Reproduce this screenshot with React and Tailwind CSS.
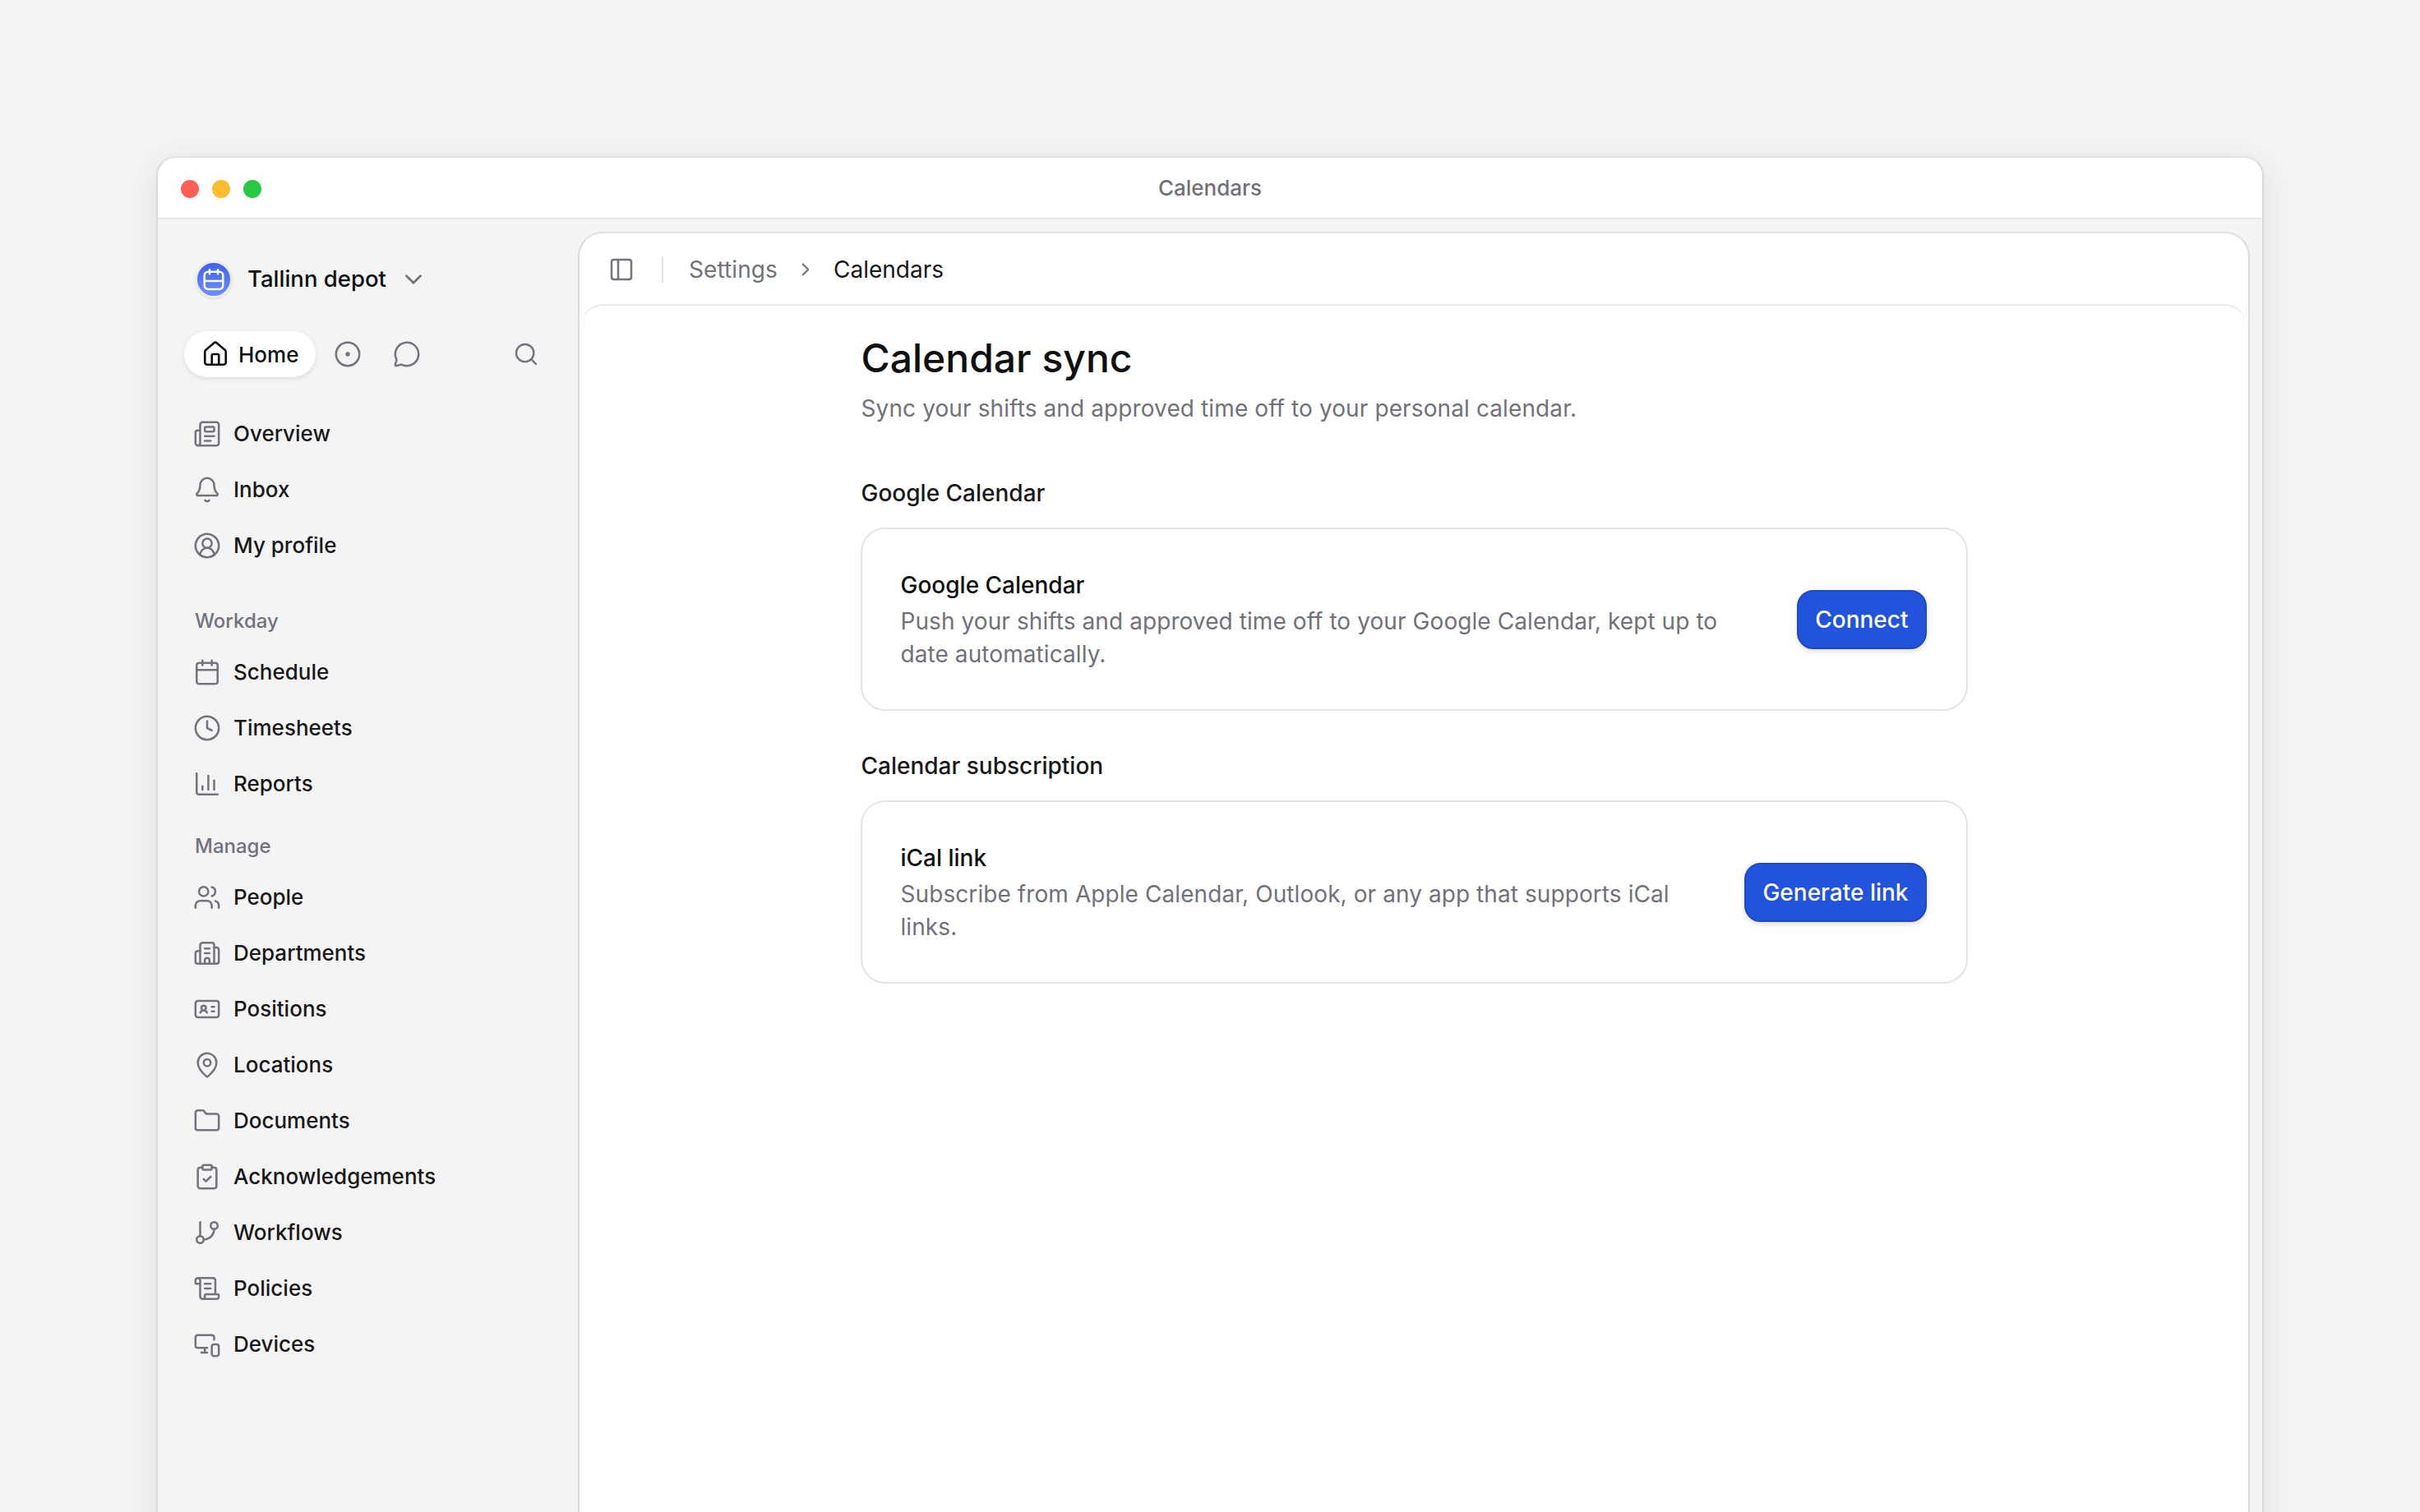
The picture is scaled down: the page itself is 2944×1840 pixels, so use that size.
import React from "react";
import {
  House, CircleDot, MessageCircle, Search, Newspaper, Bell, CircleUserRound, Calendar, Clock, ChartColumn,
  Users, Building2, IdCard, MapPin, Folder, ClipboardCheck, GitBranch, ScrollText, MonitorSmartphone,
  PanelLeft, ChevronDown, ChevronRight,
} from "lucide-react";

const top = [
  ["Overview", Newspaper],
  ["Inbox", Bell],
  ["My profile", CircleUserRound],
];
const workday = [
  ["Schedule", Calendar],
  ["Timesheets", Clock],
  ["Reports", ChartColumn],
];
const manage = [
  ["People", Users],
  ["Departments", Building2],
  ["Positions", IdCard],
  ["Locations", MapPin],
  ["Documents", Folder],
  ["Acknowledgements", ClipboardCheck],
  ["Workflows", GitBranch],
  ["Policies", ScrollText],
  ["Devices", MonitorSmartphone],
];

function NavRow({ label, Icon }) {
  return (
    <div className="flex h-[68px] items-center gap-[15px] pl-[11px]">
      <Icon size={34} strokeWidth={1.8} className="shrink-0 text-[#747480]" />
      <span className="text-[26px] font-medium leading-none text-[#18181b]">{label}</span>
    </div>
  );
}

function Card({ title, lines, action }) {
  return (
    <div className="flex h-[223px] items-center justify-between rounded-[30px] border-2 border-[#e4e4e4] bg-white pl-[47px] pr-[48px]">
      <div>
        <div className="mb-[4px] text-[28px] font-medium leading-[40px] text-[#0f0f10]">{title}</div>
        {lines.map((l) => (
          <div key={l} className="text-[28px] leading-[40px] tracking-[0.08px] text-[#71717a]">{l}</div>
        ))}
      </div>
      <button className="flex h-[72px] items-center rounded-[20px] border-2 border-[#1e4bc2] bg-[#2154db] px-[20px] text-[28px] font-medium text-white shadow-[0_3px_6px_rgba(0,0,0,0.12)]">
        {action}
      </button>
    </div>
  );
}

export default function App() {
  return (
    <div className="h-[1840px] overflow-hidden bg-[#f4f4f4] pl-[190px] pt-[190px] font-['Inter',sans-serif]">
      <div className="flex h-[1700px] w-[2564px] flex-col rounded-t-[24px] border-2 border-b-0 border-[#e2e2e2] border-x-[#d9d9d9] bg-[#f4f4f4] shadow-[0_8px_40px_rgba(0,0,0,0.09)]">
        <div className="relative flex h-[75px] shrink-0 items-center justify-center rounded-t-[22px] border-b-2 border-[#e9e9e9] bg-white">
          <div className="absolute left-[28px] top-[27px] flex gap-[16px]">
            <span className="h-[22px] w-[22px] rounded-full bg-[#ff5f57]" />
            <span className="h-[22px] w-[22px] rounded-full bg-[#febc2e]" />
            <span className="h-[22px] w-[22px] rounded-full bg-[#28c840]" />
          </div>
          <span className="text-[26px] font-medium text-[#71717a]">Calendars</span>
        </div>
        <div className="flex min-h-0 flex-1">
          <aside className="w-[511px] shrink-0 pl-[32px]">
            <div className="mt-[50px] flex items-center pl-[13px]">
              <div className="flex h-[46px] w-[46px] items-center justify-center rounded-full border-[3px] border-[#ececec] bg-gradient-to-b from-[#3f62ea] to-[#6f8dff] shadow-[0_1px_2px_rgba(0,0,0,0.12)]">
                <svg width="30" height="30" viewBox="0 0 24 24" fill="none" stroke="white" strokeWidth="2" strokeLinecap="round" strokeLinejoin="round">
                  <rect x="3" y="4.5" width="18" height="17" rx="3.5" />
                  <path d="M8 2.5v4M16 2.5v4M3 13.5h18" />
                </svg>
              </div>
              <span className="ml-[18px] text-[27.5px] font-medium leading-none text-[#0f0f10]">Tallinn depot</span>
              <ChevronDown size={34} strokeWidth={1.9} className="ml-[16px] text-[#747480]" />
            </div>
            <div className="mt-[40px] flex h-[56px] items-center">
              <div className="flex h-[56px] w-[160px] items-center gap-[11px] rounded-full bg-white pl-[21px] shadow-[0_2px_6px_rgba(0,0,0,0.1)]">
                <House size={34} strokeWidth={1.9} className="text-[#111]" />
                <span className="text-[26px] font-medium text-[#111]">Home</span>
              </div>
              <CircleDot size={34} strokeWidth={1.8} className="ml-[22px] text-[#747480]" />
              <MessageCircle size={34} strokeWidth={1.8} className="ml-[38px] text-[#747480]" />
              <Search size={32} strokeWidth={1.8} className="ml-[112px] text-[#747480]" />
            </div>
            <div className="mt-[35px]">
              {top.map(([l, I]) => <NavRow key={l} label={l} Icon={I} />)}
            </div>
            <div className="mt-[38px] flex h-[40px] items-center pl-[13px] text-[24px] font-medium text-[#71717f]">Workday</div>
            <div className="mt-[8px]">
              {workday.map(([l, I]) => <NavRow key={l} label={l} Icon={I} />)}
            </div>
            <div className="mt-[22px] flex h-[40px] items-center pl-[13px] text-[24px] font-medium text-[#71717f]">Manage</div>
            <div className="mt-[8px]">
              {manage.map(([l, I]) => <NavRow key={l} label={l} Icon={I} />)}
            </div>
          </aside>
          <main className="mt-[15px] mr-[15px] flex min-w-0 flex-1 flex-col rounded-t-[30px] border-2 border-b-0 border-[#e2e2e2] border-x-[#dbdbdb] bg-white">
            <div className="flex h-[86px] shrink-0 items-center pb-[0px] pl-[35px] pt-[2px]">
              <PanelLeft size={32} strokeWidth={1.9} className="text-[#747480]" />
              <span className="ml-[33px] h-[32px] w-[2px] bg-[#e5e5e5]" />
              <span className="ml-[31px] text-[28px] tracking-[0.1px] text-[#71717a]">Settings</span>
              <ChevronRight size={26} strokeWidth={2} className="ml-[21px] text-[#747480]" />
              <span className="ml-[21px] text-[28px] text-[#18181b]">Calendars</span>
            </div>
            <div className="flex-1 rounded-t-[30px] border-t-2 border-[#e9e9e9] bg-white">
              <div className="mx-auto w-[1347px]">
                <h1 className="mt-[32px] pl-[1px] text-[48px] font-medium leading-[64px] text-[#0f0f10]">Calendar sync</h1>
                <p className="mt-[9px] pl-[1px] text-[28px] leading-[40px] tracking-[0.11px] text-[#71717a]">Sync your shifts and approved time off to your personal calendar.</p>
                <h2 className="mt-[63px] pl-[1px] text-[28px] font-medium leading-[40px] text-[#18181b]">Google Calendar</h2>
                <div className="mt-[22px]">
                  <Card
                    title="Google Calendar"
                    lines={["Push your shifts and approved time off to your Google Calendar, kept up to", "date automatically."]}
                    action="Connect"
                  />
                </div>
                <h2 className="mt-[47px] pl-[1px] text-[28px] font-medium leading-[40px] text-[#18181b]">Calendar subscription</h2>
                <div className="mt-[22px]">
                  <Card
                    title="iCal link"
                    lines={["Subscribe from Apple Calendar, Outlook, or any app that supports iCal", "links."]}
                    action="Generate link"
                  />
                </div>
              </div>
            </div>
          </main>
        </div>
      </div>
    </div>
  );
}
